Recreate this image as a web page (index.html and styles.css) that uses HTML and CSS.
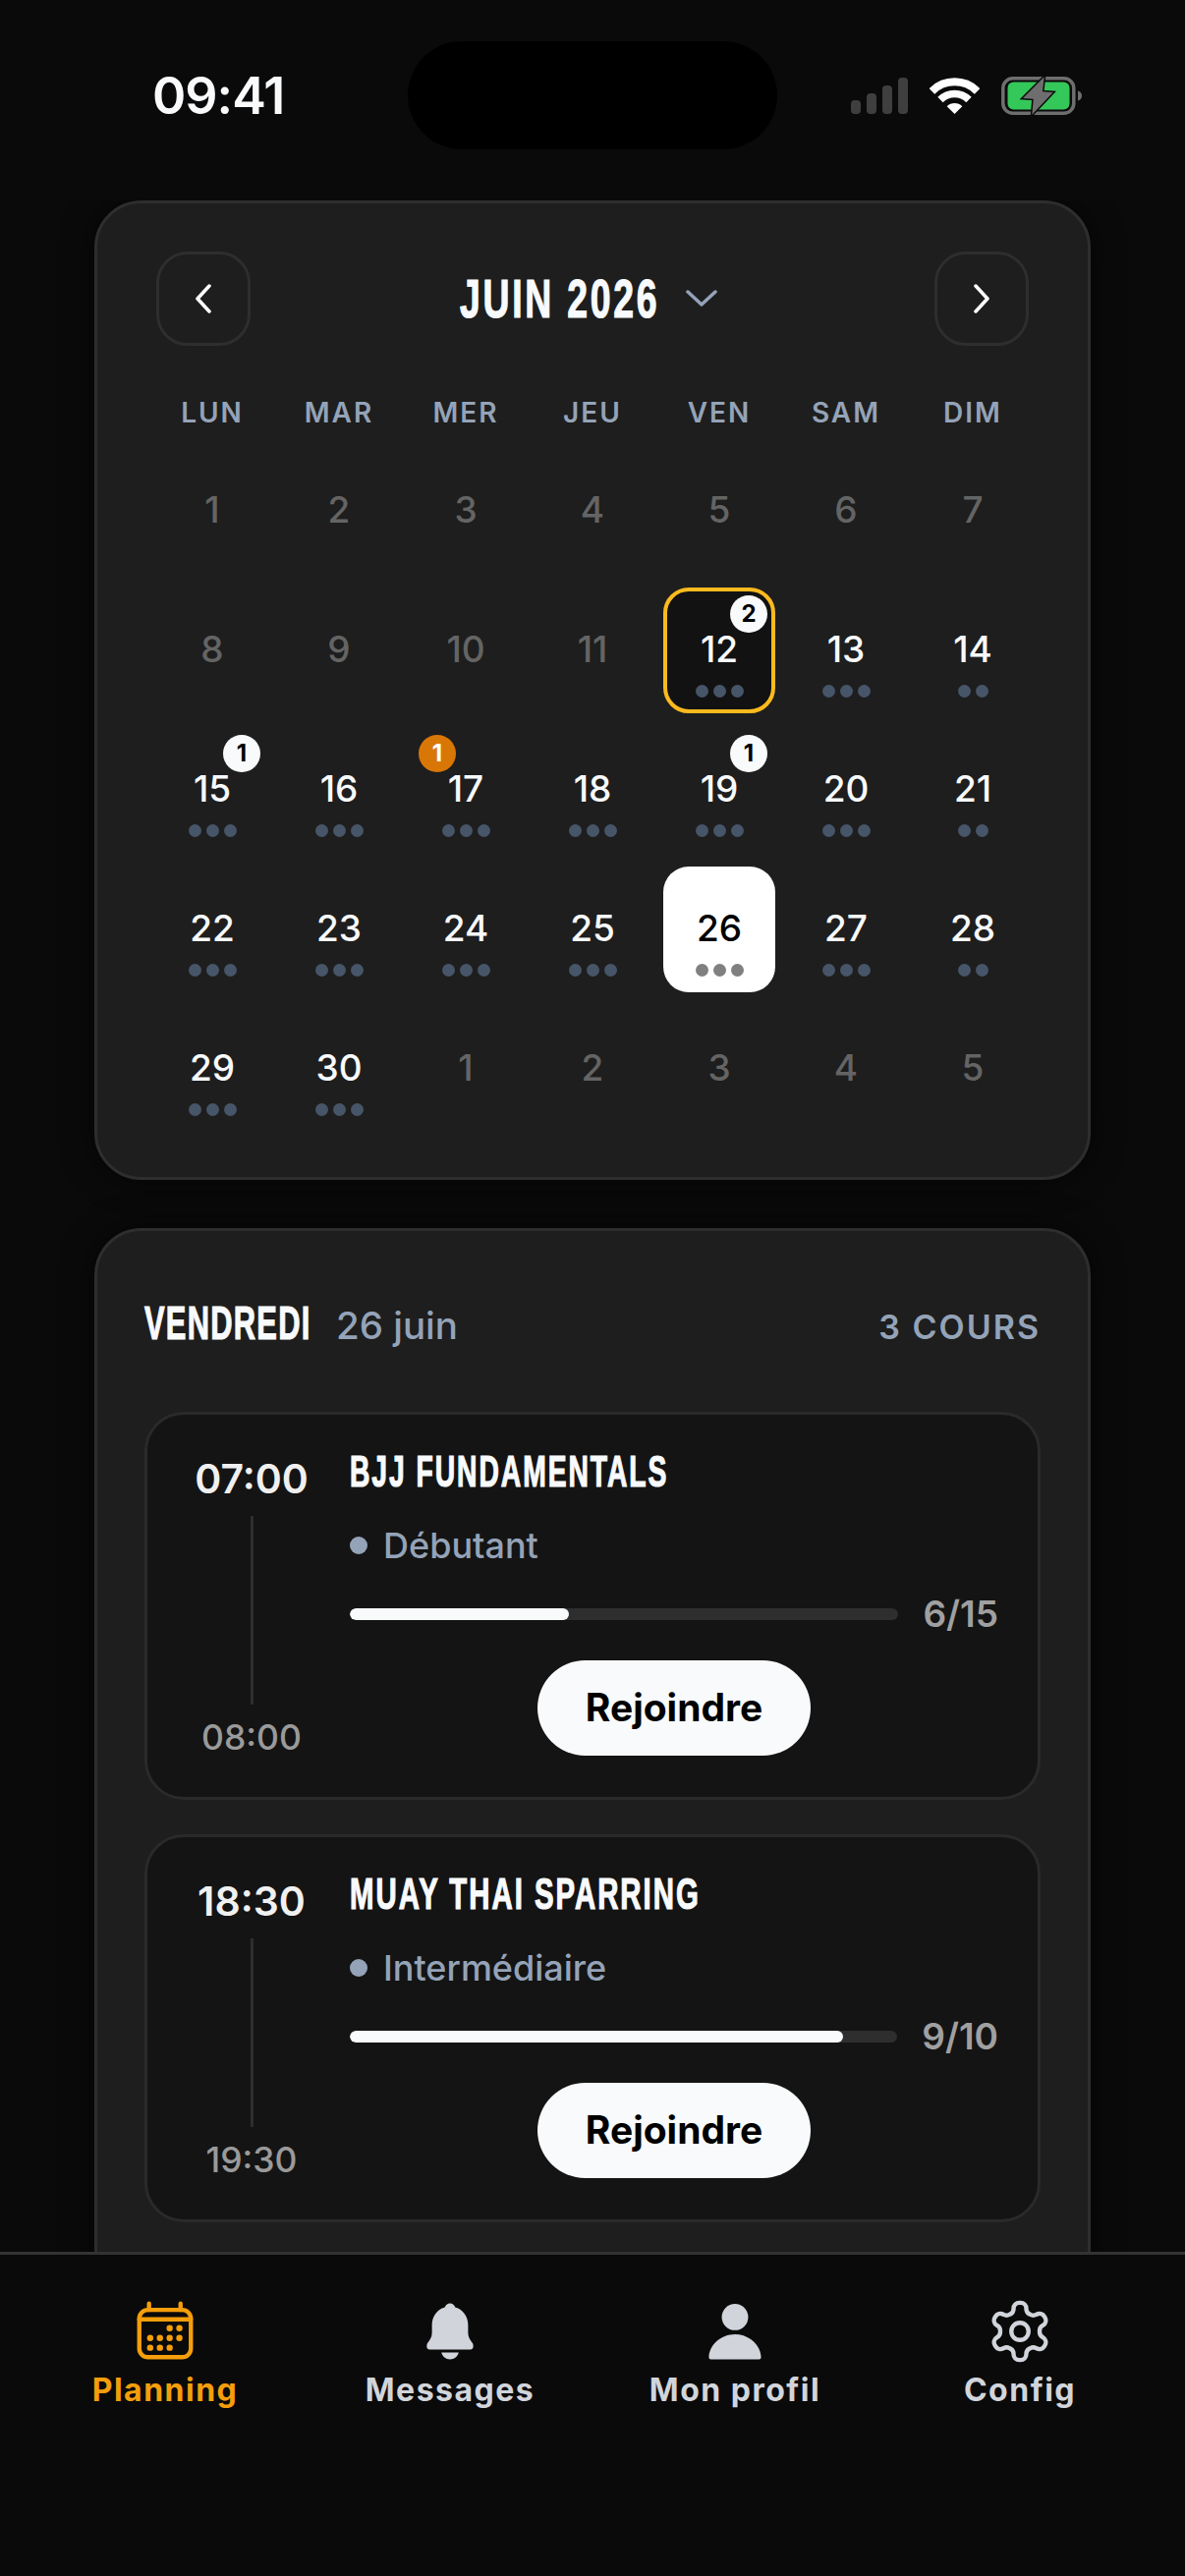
FILE: index.html
```html
<!DOCTYPE html>
<html lang="fr">
<head>
    <meta charset="utf-8">
    <title>Planning</title>
    <link rel="stylesheet" href="styles.css">
</head>
<body>
    <div class="screen">
        <header class="status-bar">
            <span class="clock">09:41</span>
            <div class="island"></div>
            <div class="status-icons">
                <svg class="icon-signal" width="58" height="37" viewBox="0 0 58 37">
                    <rect x="0" y="23" width="10" height="14" rx="4"/>
                    <rect x="16" y="16" width="10" height="21" rx="4"/>
                    <rect x="32" y="8" width="10" height="29" rx="4"/>
                    <rect x="48" y="0" width="10" height="37" rx="4"/>
                </svg>
                <svg class="icon-wifi" width="51" height="37" viewBox="0 0 51 37">
                    <path class="wifi-arc" stroke-width="8" d="M2.4 13.9A32.7 32.7 0 0 1 48.6 13.9"/>
                    <path class="wifi-arc" stroke-width="7.5" d="M11 22.5A20.5 20.5 0 0 1 40 22.5"/>
                    <path class="wifi-dot" d="M25.5 37L17.7 29.2A11 11 0 0 1 33.3 29.2Z"/>
                </svg>
                <svg class="icon-battery" width="84" height="41" viewBox="0 0 84 41">
                    <rect class="batt-shell" x="1.8" y="2.8" width="72" height="35.5" rx="10"/>
                    <rect class="batt-fill" x="6.5" y="6.5" width="63" height="28" rx="6"/>
                    <path class="batt-tip" d="M78 15.5c3 .5 4 3 4 5s-1 4.500-4 5Z"/>
                    <path class="batt-bolt" d="M43.700 1.300L22 23L32.700 23.700L31.300 39.700L52.700 17L42 16.300Z"/>
                </svg>
            </div>
        </header>

        <main class="content">
            <section class="card calendar">
                <div class="cal-header">
                    <button class="nav-btn">
                        <svg width="18" height="30" viewBox="0 0 18 30"><path d="M15 2L3 15L15 28"/></svg>
                    </button>
                    <div class="month">
                        <span class="display month-name">JUIN 2026</span>
                        <svg class="month-caret" width="32" height="18" viewBox="0 0 32 18"><path d="M2 2L16 15L30 2"/></svg>
                    </div>
                    <button class="nav-btn">
                        <svg width="18" height="30" viewBox="0 0 18 30"><path d="M3 2L15 15L3 28"/></svg>
                    </button>
                </div>

                <div class="weekdays">
                    <span>LUN</span><span>MAR</span><span>MER</span><span>JEU</span><span>VEN</span><span>SAM</span><span>DIM</span>
                </div>

                <div class="days">
                    <div class="day off"><span class="num">1</span></div>
                    <div class="day off"><span class="num">2</span></div>
                    <div class="day off"><span class="num">3</span></div>
                    <div class="day off"><span class="num">4</span></div>
                    <div class="day off"><span class="num">5</span></div>
                    <div class="day off"><span class="num">6</span></div>
                    <div class="day off"><span class="num">7</span></div>

                    <div class="day off"><span class="num">8</span></div>
                    <div class="day off"><span class="num">9</span></div>
                    <div class="day off"><span class="num">10</span></div>
                    <div class="day off"><span class="num">11</span></div>
                    <div class="day booked"><span class="badge">2</span><span class="num">12</span><div class="dots"><i></i><i></i><i></i></div></div>
                    <div class="day"><span class="num">13</span><div class="dots"><i></i><i></i><i></i></div></div>
                    <div class="day"><span class="num">14</span><div class="dots"><i></i><i></i></div></div>

                    <div class="day"><span class="badge">1</span><span class="num">15</span><div class="dots"><i></i><i></i><i></i></div></div>
                    <div class="day"><span class="num">16</span><div class="dots"><i></i><i></i><i></i></div></div>
                    <div class="day"><span class="badge badge-wait">1</span><span class="num">17</span><div class="dots"><i></i><i></i><i></i></div></div>
                    <div class="day"><span class="num">18</span><div class="dots"><i></i><i></i><i></i></div></div>
                    <div class="day"><span class="badge">1</span><span class="num">19</span><div class="dots"><i></i><i></i><i></i></div></div>
                    <div class="day"><span class="num">20</span><div class="dots"><i></i><i></i><i></i></div></div>
                    <div class="day"><span class="num">21</span><div class="dots"><i></i><i></i></div></div>

                    <div class="day"><span class="num">22</span><div class="dots"><i></i><i></i><i></i></div></div>
                    <div class="day"><span class="num">23</span><div class="dots"><i></i><i></i><i></i></div></div>
                    <div class="day"><span class="num">24</span><div class="dots"><i></i><i></i><i></i></div></div>
                    <div class="day"><span class="num">25</span><div class="dots"><i></i><i></i><i></i></div></div>
                    <div class="day today"><span class="num">26</span><div class="dots"><i></i><i></i><i></i></div></div>
                    <div class="day"><span class="num">27</span><div class="dots"><i></i><i></i><i></i></div></div>
                    <div class="day"><span class="num">28</span><div class="dots"><i></i><i></i></div></div>

                    <div class="day"><span class="num">29</span><div class="dots"><i></i><i></i><i></i></div></div>
                    <div class="day"><span class="num">30</span><div class="dots"><i></i><i></i><i></i></div></div>
                    <div class="day off"><span class="num">1</span></div>
                    <div class="day off"><span class="num">2</span></div>
                    <div class="day off"><span class="num">3</span></div>
                    <div class="day off"><span class="num">4</span></div>
                    <div class="day off"><span class="num">5</span></div>
                </div>
            </section>

            <section class="card agenda">
                <div class="agenda-header">
                    <span class="display day-name">VENDREDI</span>
                    <span class="day-date">26 juin</span>
                    <span class="class-count">3 COURS</span>
                </div>

                <article class="class-card">
                    <div class="times">
                        <span class="time-start">07:00</span>
                        <div class="time-line"></div>
                        <span class="time-end">08:00</span>
                    </div>
                    <div class="class-info">
                        <h3 class="display class-name name-bjj">BJJ FUNDAMENTALS</h3>
                        <div class="level"><i></i>Débutant</div>
                        <div class="capacity">
                            <div class="bar"><div class="bar-fill" style="width: 40%"></div></div>
                            <span class="seats">6/15</span>
                        </div>
                        <button class="join">Rejoindre</button>
                    </div>
                </article>

                <article class="class-card">
                    <div class="times">
                        <span class="time-start">18:30</span>
                        <div class="time-line"></div>
                        <span class="time-end">19:30</span>
                    </div>
                    <div class="class-info">
                        <h3 class="display class-name name-muay">MUAY THAI SPARRING</h3>
                        <div class="level"><i></i>Intermédiaire</div>
                        <div class="capacity">
                            <div class="bar"><div class="bar-fill" style="width: 90%"></div></div>
                            <span class="seats">9/10</span>
                        </div>
                        <button class="join">Rejoindre</button>
                    </div>
                </article>
            </section>
        </main>

        <nav class="tabbar">
            <a class="tab active">
                <svg class="line-icon" width="70" height="70" viewBox="0 0 24 24">
                    <rect x="3" y="4.500" width="18" height="16.500" rx="3"/>
                    <path d="M3 7.800H21M6.400 2.300V4.500M17.400 2.300V4.500"/>
                    <g class="cal-dots">
                        <circle cx="13.600" cy="10.900" r="1.100"/><circle cx="17" cy="10.900" r="1.100"/>
                        <circle cx="6.800" cy="14.300" r="1.100"/><circle cx="10.200" cy="14.300" r="1.100"/><circle cx="13.600" cy="14.300" r="1.100"/><circle cx="17" cy="14.300" r="1.100"/>
                        <circle cx="6.800" cy="17.700" r="1.100"/><circle cx="10.200" cy="17.700" r="1.100"/><circle cx="13.600" cy="17.700" r="1.100"/>
                    </g>
                </svg>
                <span>Planning</span>
            </a>
            <a class="tab">
                <svg class="solid-icon" width="70" height="70" viewBox="0 0 24 24">
                    <path d="M12 2.200c-.9 0-1.600.6-1.800 1.400C7.400 4.400 5.700 6.900 5.700 9.800v2.600c0 1.600-.7 2.500-1.500 3.600-.5.7-.5 2.300.7 2.300h14.200c1.200 0 1.200-1.600.7-2.300-.8-1.100-1.500-2-1.500-3.600V9.800c0-2.900-1.700-5.400-4.500-6.200C13.600 2.800 12.900 2.200 12 2.200Z"/>
                    <path d="M9 19.400h6c-.3 1.400-1.500 2.400-3 2.400s-2.700-1-3-2.400Z"/>
                </svg>
                <span>Messages</span>
            </a>
            <a class="tab">
                <svg class="solid-icon" width="70" height="70" viewBox="0 0 24 24">
                    <circle cx="12" cy="7" r="4.600"/>
                    <path d="M12 13c-5 0-9 3.800-9.100 8a.7.7 0 0 0 .7.750h16.800a.7.7 0 0 0 .7-.750C21 16.800 17 13 12 13Z"/>
                </svg>
                <span>Mon profil</span>
            </a>
            <a class="tab">
                <svg class="line-icon" width="70" height="70" viewBox="0 0 24 24">
                    <path d="M12.220 2h-.44a2 2 0 0 0-2 2v.18a2 2 0 0 1-1 1.730l-.43.25a2 2 0 0 1-2 0l-.15-.08a2 2 0 0 0-2.730.73l-.22.38a2 2 0 0 0 .73 2.730l.15.1a2 2 0 0 1 1 1.720v.51a2 2 0 0 1-1 1.740l-.15.09a2 2 0 0 0-.73 2.730l.22.38a2 2 0 0 0 2.730.73l.15-.08a2 2 0 0 1 2 0l.43.25a2 2 0 0 1 1 1.730V20a2 2 0 0 0 2 2h.44a2 2 0 0 0 2-2v-.18a2 2 0 0 1 1-1.730l.43-.25a2 2 0 0 1 2 0l.15.08a2 2 0 0 0 2.730-.73l.22-.39a2 2 0 0 0-.73-2.730l-.15-.08a2 2 0 0 1-1-1.740v-.5a2 2 0 0 1 1-1.740l.15-.09a2 2 0 0 0 .73-2.730l-.22-.38a2 2 0 0 0-2.730-.73l-.15.08a2 2 0 0 1-2 0l-.43-.25a2 2 0 0 1-1-1.730V4a2 2 0 0 0-2-2z"/>
                    <circle cx="12" cy="12" r="3"/>
                </svg>
                <span>Config</span>
            </a>
        </nav>
    </div>
</body>
</html>
```

FILE: styles.css
```css
* {
    box-sizing: border-box;
}
body {
    margin: 0;
    background: #0a0a0a;
    font-family: Inter, "Noto Sans", sans-serif;
    color: #f8fafc;
}
.screen {
    width: 1206px;
    height: 2622px;
    display: flex;
    flex-direction: column;
    overflow: hidden;
}

/* display type: stands in for a tall condensed face */
.display {
    display: inline-block;
    font-family: "Liberation Sans", sans-serif;
    font-weight: 700;
    white-space: nowrap;
    transform-origin: left center;
    -webkit-text-stroke: 1.2px currentColor;
}

/* status bar */
.status-bar {
    display: grid;
    grid-template-columns: 1fr 376px 1fr;
    align-items: center;
    padding-top: 42px;
    margin-bottom: 52px;
}
.clock {
    padding-left: 155px;
    font-size: 52px;
    font-weight: 600;
    letter-spacing: -1px;
}
.island {
    height: 110px;
    background: #000;
    border-radius: 55px;
}
.status-icons {
    display: flex;
    align-items: center;
    gap: 22px;
    padding-left: 75px;
}
.icon-signal rect {
    fill: #3f3f3f;
}
.wifi-arc {
    fill: none;
    stroke: #fff;
}
.wifi-dot {
    fill: #fff;
}
.batt-shell {
    fill: none;
    stroke: #6e6e6e;
    stroke-width: 3.500;
}
.batt-fill {
    fill: #34c759;
}
.batt-tip {
    fill: #6e6e6e;
}
.batt-bolt {
    fill: #6e6e6e;
    stroke: #0a0a0a;
    stroke-width: 3;
    paint-order: stroke;
}

/* cards */
.content {
    flex: 1;
    min-height: 0;
    overflow: hidden;
    padding: 0 96px;
}
.card {
    background: #1e1e1e;
    border: 3px solid #2e2e2e;
    border-radius: 48px;
    box-shadow: 0 0 32px rgba(0, 0, 0, .6);
}

/* calendar */
.calendar {
    padding: 49px 58px 46px 60px;
    margin-bottom: 49px;
}
.cal-header {
    display: flex;
    justify-content: space-between;
    align-items: center;
    padding: 0 2px 0 0;
}
.nav-btn {
    width: 96px;
    height: 96px;
    display: flex;
    align-items: center;
    justify-content: center;
    background: transparent;
    border: 3px solid #2e2e2e;
    border-radius: 32px;
    padding: 0;
}
.nav-btn path {
    fill: none;
    stroke: #fff;
    stroke-width: 3.500;
    stroke-linecap: round;
    stroke-linejoin: round;
}
.month {
    display: flex;
    align-items: center;
    gap: 26px;
    padding-right: 8px;
}
.month-name {
    width: 204px;
    font-size: 55px;
    line-height: 1;
    letter-spacing: 4px;
    transform: scaleX(.68);
}
.month-caret path {
    fill: none;
    stroke: #94a3b8;
    stroke-width: 3.500;
    stroke-linecap: round;
    stroke-linejoin: round;
}
.weekdays {
    display: grid;
    grid-template-columns: repeat(7, 114px);
    column-gap: 15px;
    height: 32px;
    margin-top: 52px;
    margin-bottom: 20px;
    text-align: center;
    font-size: 28px;
    line-height: 32px;
    font-weight: 600;
    letter-spacing: 2px;
    color: #94a3b8;
}
.days {
    display: grid;
    grid-template-columns: repeat(7, 114px);
    grid-auto-rows: 128px;
    gap: 14px 15px;
}
.day {
    position: relative;
    display: flex;
    flex-direction: column;
    align-items: center;
    padding-top: 38px;
    border: 3px solid transparent;
    border-radius: 26px;
}
.num {
    font-size: 37px;
    line-height: 44px;
    font-weight: 500;
}
.off .num {
    color: #646464;
}
.dots {
    display: flex;
    gap: 5px;
    margin-top: 14px;
}
.dots i {
    width: 13px;
    height: 13px;
    border-radius: 50%;
    background: #475569;
}
.booked {
    padding-top: 37px;
    background: #121212;
    border: 4px solid #fcba1f;
}
.booked .badge {
    top: 4px;
    right: 4px;
}
.today {
    background: #fff;
    color: #000;
}
.today .dots i {
    background: #808080;
}
.badge {
    position: absolute;
    top: 5px;
    right: 5px;
    width: 38px;
    height: 38px;
    border-radius: 50%;
    background: #f8fafc;
    color: #000;
    font-size: 24px;
    line-height: 38px;
    font-weight: 700;
    text-align: center;
}
.badge-wait {
    right: auto;
    left: 6px;
    background: #d97706;
    color: #fff;
}

/* agenda */
.agenda {
    padding: 48px;
    height: 1200px;
}
.agenda-header {
    display: flex;
    align-items: baseline;
    height: 136px;
    padding-top: 20px;
}
.day-name {
    width: 169px;
    font-size: 49px;
    line-height: 50px;
    letter-spacing: 2px;
    transform: scaleX(.63);
    margin-right: 26px;
}
.day-date {
    font-size: 38.500px;
    font-weight: 500;
    color: #94a3b8;
}
.class-count {
    margin-left: auto;
    font-size: 34px;
    font-weight: 600;
    letter-spacing: 2px;
    color: #94a3b8;
}
.class-card {
    display: flex;
    gap: 34px;
    height: 395px;
    margin-bottom: 35px;
    padding: 41px 40px 40px;
    background: #141414;
    border: 3px solid #2a2a2a;
    border-radius: 40px;
}
.times {
    flex: 0 0 132px;
    display: flex;
    flex-direction: column;
    align-items: center;
}
.time-start {
    font-size: 41px;
    line-height: 48px;
    font-weight: 600;
    color: #f0f0f0;
}
.time-line {
    width: 3px;
    height: 194px;
    margin: 14px 0 14px;
    background: #2e2e2e;
}
.time-end {
    font-size: 35.500px;
    line-height: 40px;
    font-weight: 500;
    color: #9a9a9a;
}
.class-info {
    flex: 1;
    display: flex;
    flex-direction: column;
}
.class-name {
    margin: -8px 0 0;
    font-size: 44px;
    line-height: 50px;
    letter-spacing: 3px;
}
.name-bjj {
    transform: scaleX(.643);
}
.name-muay {
    transform: scaleX(.667);
}
.level {
    display: flex;
    align-items: center;
    gap: 16px;
    margin-top: 29px;
    font-size: 36px;
    line-height: 42px;
    font-weight: 500;
    color: #94a3b8;
}
.level i {
    width: 18px;
    height: 18px;
    border-radius: 50%;
    background: #94a3b8;
}
.capacity {
    display: flex;
    align-items: center;
    gap: 25px;
    margin-top: 28px;
}
.bar {
    flex: 1;
    height: 12px;
    border-radius: 6px;
    background: #2e2e2e;
    overflow: hidden;
}
.bar-fill {
    height: 100%;
    border-radius: 6px;
    background: #f8fafc;
}
.seats {
    font-size: 37px;
    line-height: 42px;
    font-weight: 600;
    color: #a0a0a0;
}
.join {
    align-self: center;
    width: 278px;
    height: 97px;
    margin-top: 26px;
    padding: 0 0 2px;
    border: 0;
    border-radius: 49px;
    background: #f8fafc;
    color: #000;
    font-family: inherit;
    font-size: 39px;
    font-weight: 650;
}

/* tab bar */
.tabbar {
    flex: 0 0 330px;
    display: grid;
    grid-template-columns: repeat(4, 290px);
    padding: 43px 23px 0;
    background: #0a0a0a;
    border-top: 3px solid #333;
}
.tab {
    display: flex;
    flex-direction: column;
    align-items: center;
    color: #d1d5db;
    font-size: 32px;
    line-height: 40px;
    font-weight: 700;
    letter-spacing: 1.500px;
}
.tab svg {
    margin-bottom: 5px;
}
.tab.active {
    color: #f59e0b;
}
.line-icon {
    fill: none;
    stroke: currentColor;
    stroke-width: 1.500;
    stroke-linecap: round;
    stroke-linejoin: round;
}
.cal-dots {
    fill: currentColor;
    stroke: none;
}
.solid-icon {
    fill: currentColor;
}
```
